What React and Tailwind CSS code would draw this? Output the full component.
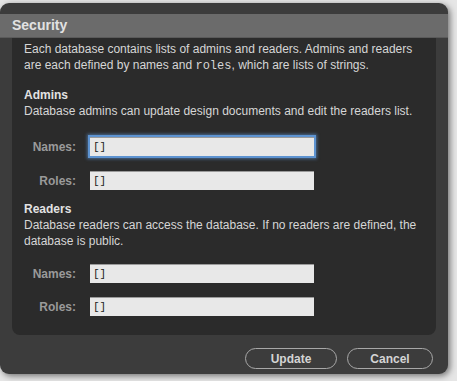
import React from 'react';

function Field({ label, focused }) {
  return (
    <div className="flex items-center">
      <label className="w-[66px] text-right pr-[14px] text-[12px] font-bold text-[#9a9a9a]">{label}</label>
      <input
        type="text"
        defaultValue="[]"
        className={
          'w-[224px] h-[19px] px-[3px] bg-[#e8e8e8] text-[11px] text-[#222] border-t border-[#9a9a9a] outline-none ' +
          (focused ? 'shadow-[0_0_0_2px_#5d93d1,0_0_3px_3px_rgba(93,147,209,0.6)]' : '')
        }
        style={{ fontFamily: '"Liberation Mono", monospace' }}
      />
    </div>
  );
}

export default function App() {
  return (
    <div className="w-[457px] h-[381px] bg-[#e6e6e6] pt-[3px] overflow-hidden" style={{ fontFamily: '"Liberation Sans", Arial, sans-serif' }}>
      <div className="w-[448px] h-[371px] rounded-[9px] bg-[#3c3c3c] shadow-[2px_2px_6px_rgba(0,0,0,0.5)] pt-[11px] flex flex-col">
        <div className="h-[24px] bg-[#6b6b6b] px-3 flex items-center border-b border-[#5a5a5a]">
          <h1 className="text-[14px] font-bold text-[#e2e2e2]">Security</h1>
        </div>
        <div className="mx-3 h-[297px] bg-[#2b2b2b] rounded-b-[8px] px-3 pt-[3px] text-[12px] leading-[16px] text-[#d6d6d6]">
          <p>
            Each database contains lists of admins and readers. Admins and readers are each defined by names and{' '}
            <span className="text-[12px] leading-[16px]" style={{ fontFamily: '"Liberation Mono", monospace' }}>roles</span>, which are lists of strings.
          </p>
          <h2 className="mt-[13px] font-bold text-[#e2e2e2]">Admins</h2>
          <p>Database admins can update design documents and edit the readers list.</p>
          <div className="mt-[18px] flex flex-col gap-[15px]">
            <Field label="Names:" focused />
            <Field label="Roles:" />
          </div>
          <h2 className="mt-[11px] font-bold text-[#e2e2e2]">Readers</h2>
          <p>Database readers can access the database. If no readers are defined, the database is public.</p>
          <div className="mt-[15px] flex flex-col gap-[14px]">
            <Field label="Names:" />
            <Field label="Roles:" />
          </div>
        </div>
        <div className="flex justify-end gap-[10px] pr-[15px] pt-[13px]">
          <button className="w-[92px] h-[21px] rounded-full border border-[#a8a8a8] text-[12px] font-bold text-[#d4d4d4]">Update</button>
          <button className="w-[86px] h-[21px] rounded-full border border-[#a8a8a8] text-[12px] font-bold text-[#d4d4d4]">Cancel</button>
        </div>
      </div>
    </div>
  );
}
